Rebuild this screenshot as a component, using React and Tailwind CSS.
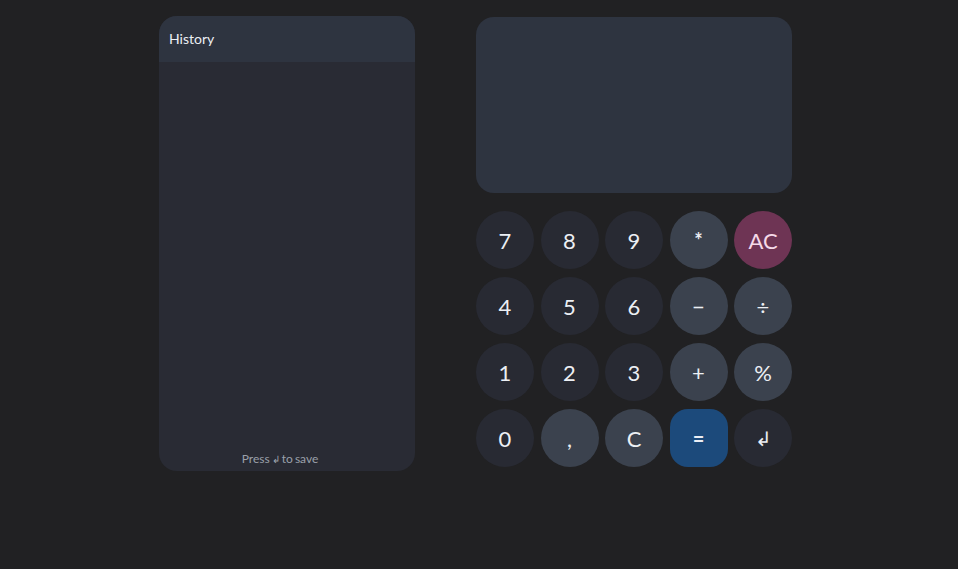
const keys = [
  { label: '7', kind: 'num' },
  { label: '8', kind: 'num' },
  { label: '9', kind: 'num' },
  { label: '*', kind: 'op' },
  { label: 'AC', kind: 'clear' },
  { label: '4', kind: 'num' },
  { label: '5', kind: 'num' },
  { label: '6', kind: 'num' },
  { label: '−', kind: 'op' },
  { label: '÷', kind: 'op' },
  { label: '1', kind: 'num' },
  { label: '2', kind: 'num' },
  { label: '3', kind: 'num' },
  { label: '+', kind: 'op' },
  { label: '%', kind: 'op' },
  { label: '0', kind: 'num' },
  { label: ',', kind: 'op' },
  { label: 'C', kind: 'op' },
  { label: '=', kind: 'equals' },
  { label: '↲', kind: 'num' },
];

const styles = {
  num: 'rounded-full bg-[#282a33]',
  op: 'rounded-full bg-[#3b424e]',
  clear: 'rounded-full bg-[#6e3454] text-[#f5d9e8]',
  equals: 'rounded-[18px] bg-[#1c4a7b]',
};

function Key({ label, kind }) {
  const size =
    label === '*' || label === '='
      ? 'text-[20px] font-bold'
      : label === '↲'
        ? 'text-[20px]'
        : 'text-[22px]';
  return (
    <button className={`h-[58px] flex items-center justify-center text-[#eceff4] ${size} ${styles[kind]}`}>
      {label}
    </button>
  );
}

export default function App() {
  return (
    <div
      className="w-[958px] h-[569px] bg-[#212123] flex gap-[61px] pl-[159px] pt-4"
      style={{ fontFamily: 'Lato, "Noto Sans", sans-serif' }}
    >
      <section className="w-[256px] h-[455px] rounded-[18px] bg-[#292b34] overflow-hidden flex flex-col">
        <header className="h-[46px] bg-[#2e3440] px-[10px] pb-[1px] flex items-center text-[14px] text-[#eceff4]">
          History
        </header>
        <div className="flex-1" />
        <p className="text-center text-[12px] text-[#9aa0aa] pb-[3px] pr-[14px] [word-spacing:-1px]">
          Press <span className="text-[10px]">↲</span> to save
        </p>
      </section>

      <div className="w-[316px] pt-px">
        <div className="h-[176px] rounded-[18px] bg-[#2e3440]" />
        <div className="mt-[18px] grid grid-cols-5 gap-x-[6.5px] gap-y-[8px]">
          {keys.map((k) => (
            <Key key={k.label} {...k} />
          ))}
        </div>
      </div>
    </div>
  );
}
